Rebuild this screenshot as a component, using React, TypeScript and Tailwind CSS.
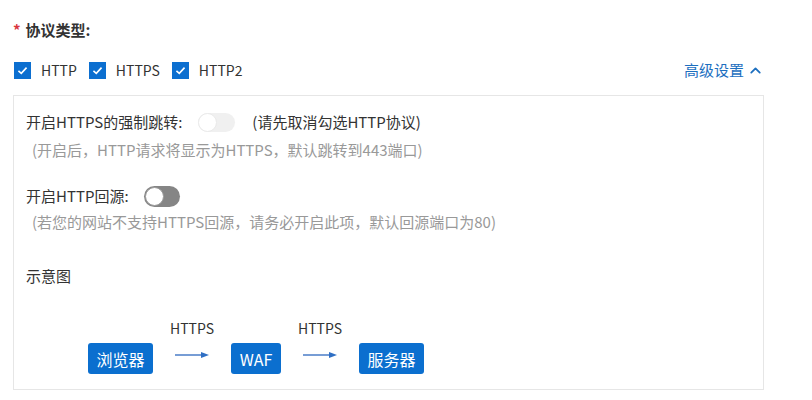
import React from "react"
import { ChevronUp } from "lucide-react"

const font = { fontFamily: '"Noto Sans CJK SC", "Noto Sans", sans-serif' }

function Check({ label }: { label: string }) {
  return (
    <label className="flex items-center">
      <span className="flex h-[17px] w-[17px] items-center justify-center bg-[#0c6fd0]">
        <svg viewBox="0 0 16 16" className="h-[13px] w-[13px]">
          <polyline points="3,8.5 6.5,11.5 13,4.5" fill="none" stroke="#fff" strokeWidth="2" />
        </svg>
      </span>
      <span className="ml-[10px] text-[14px] text-[#333]">{label}</span>
    </label>
  )
}

function Arrow({ label }: { label: string }) {
  return (
    <div className="flex w-[42px] flex-col items-center">
      <span className="h-[20px] text-[14px] leading-[20px] text-[#333]">{label}</span>
      <svg viewBox="0 0 34 8" className="mt-[13px] h-[8px] w-[34px]">
        <line x1="0" y1="4" x2="28" y2="4" stroke="#4a7cc7" strokeWidth="1.5" />
        <polygon points="26,1 34,4 26,7" fill="#2f6fc4" />
      </svg>
    </div>
  )
}

function Node({ label, w }: { label: string; w: string }) {
  return (
    <div className={`mt-[25px] flex h-[31px] items-center justify-center rounded-[3px] bg-[#0b6fcf] text-[16px] text-white ${w}`}>
      {label}
    </div>
  )
}

export default function App() {
  return (
    <div className="min-h-[400px] bg-white pt-[20px]" style={font}>
      <div className="ml-[13px] w-[751px]">
        <div className="flex h-[20px] items-center text-[15px] font-bold text-[#333]">
          <span className="mr-[5px] text-[#d9363e]">*</span>
          协议类型:
        </div>

        <div className="mt-[20px] flex h-[20px] items-center">
          <div className="flex items-center gap-[12px] pl-[1px]">
            <Check label="HTTP" />
            <Check label="HTTPS" />
            <Check label="HTTP2" />
          </div>
          <button className="ml-auto flex items-center text-[15px] text-[#1d6fbf]">
            高级设置
            <ChevronUp className="ml-[3px] h-[17px] w-[17px]" strokeWidth={2.5} />
          </button>
        </div>

        <div className="mt-[15px] border border-[#e6e6e6] px-[12px] pb-[15px] pt-[16px] text-[15px] text-[#333]">
          <div className="flex h-[20px] items-center">
            <span>开启HTTPS的强制跳转:</span>
            <span className="ml-[16px] flex h-[19px] w-[37px] items-center rounded-full bg-[#f0f0f0]">
              <span className="h-[19px] w-[19px] rounded-full border border-[#eaeaea] bg-white" />
            </span>
            <span className="ml-[17px]">(请先取消勾选HTTP协议)</span>
          </div>
          <div className="mt-[8px] h-[20px] pl-[6px] leading-[20px] text-[#999]">
            (开启后，HTTP请求将显示为HTTPS，默认跳转到443端口)
          </div>

          <div className="mt-[26px] flex h-[20px] items-center">
            <span>开启HTTP回源:</span>
            <span className="ml-[15px] flex h-[21px] w-[36px] items-center rounded-full bg-[#858585] p-[1px]">
              <span className="h-[19px] w-[19px] rounded-full border border-[#9a9a9a] bg-white" />
            </span>
          </div>
          <div className="mt-[6px] h-[20px] pl-[6px] leading-[20px] text-[#999]">
            (若您的网站不支持HTTPS回源，请务必开启此项，默认回源端口为80)
          </div>

          <div className="mt-[34px] h-[20px] leading-[20px]">示意图</div>

          <div className="ml-[62px] mt-[32px] flex items-start gap-[18px]">
            <Node label="浏览器" w="w-[65px]" />
            <Arrow label="HTTPS" />
            <Node label="WAF" w="w-[50px]" />
            <Arrow label="HTTPS" />
            <Node label="服务器" w="w-[65px]" />
          </div>
        </div>
      </div>
    </div>
  )
}
